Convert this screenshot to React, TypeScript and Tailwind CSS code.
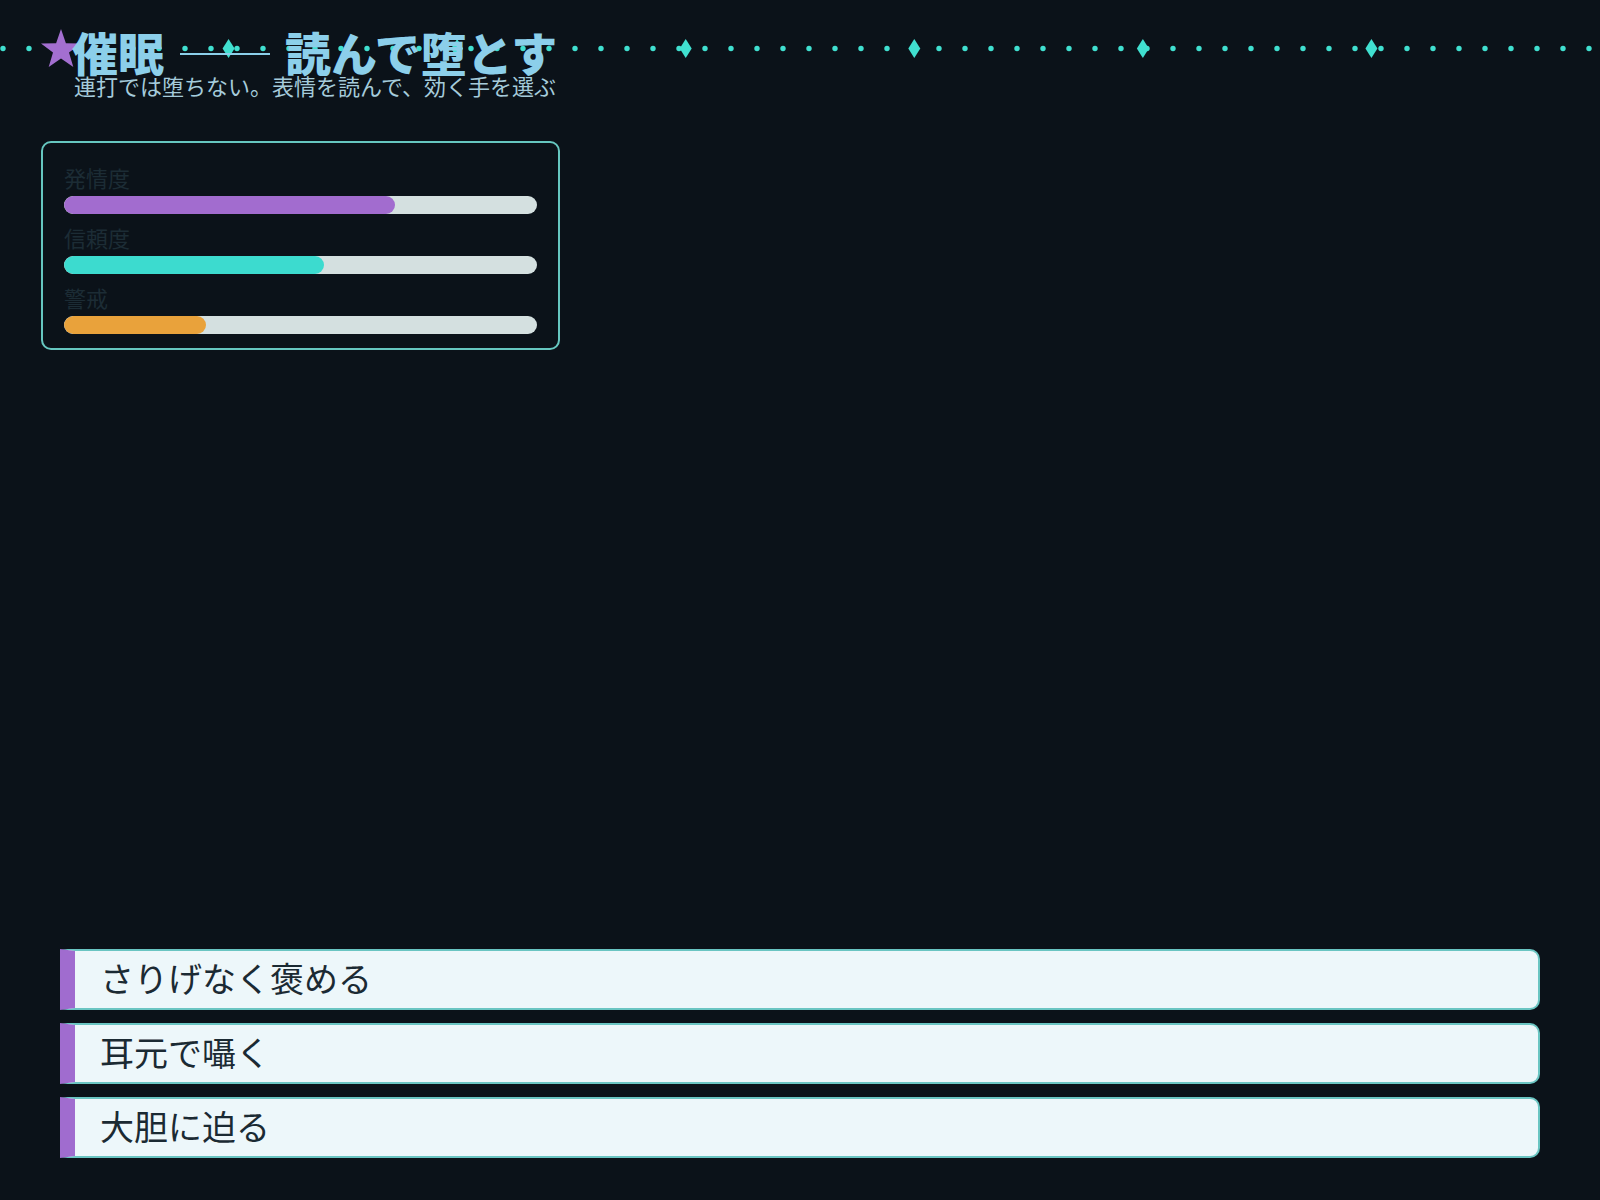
import React from 'react';

type Stat = {
  label: string;
  value: number;
  color: string;
};

const stats: Stat[] = [
  { label: '発情度', value: 70, color: 'bg-[#a26ccf]' },
  { label: '信頼度', value: 55, color: 'bg-[#3cdbcf]' },
  { label: '警戒', value: 30, color: 'bg-[#e9a23b]' },
];

const choices = ['さりげなく褒める', '耳元で囁く', '大胆に迫る'];

// dotted ribbon behind the title: small dots every 26px, a diamond every seventh of the width
const DotBand: React.FC = () => {
  const dots = Array.from({ length: 62 }, (_, i) => 3 + i * 26);
  const diamonds = Array.from({ length: 6 }, (_, i) => ((i + 1) * 1600) / 7);
  return (
    <svg
      className="absolute left-0 top-[36px] h-[25px] w-full"
      viewBox="0 0 1600 25"
      preserveAspectRatio="none"
    >
      {dots.map((x) => (
        <circle key={x} cx={x} cy={12.5} r={2.7} fill="#40e0d0" />
      ))}
      {diamonds.map((x) => (
        <polygon
          key={x}
          points={`${x},3 ${x + 6},12.5 ${x},22 ${x - 6},12.5`}
          fill="#40e0d0"
        />
      ))}
    </svg>
  );
};

const Star: React.FC = () => (
  <svg className="absolute left-[-32px] top-[1px] h-[40px] w-[42px]" viewBox="0 0 42 40">
    <polygon
      points="21,0 25.9,14.3 41,14.5 29,23.6 33.3,38 21,29.4 8.7,38 13,23.6 1,14.5 16.1,14.3"
      fill="#a36fd0"
    />
  </svg>
);

export default function App() {
  return (
    <div className="relative flex min-h-screen w-full flex-col bg-[#0b1219] font-['Noto_Sans_CJK_JP','Noto_Sans',sans-serif]">
      <header className="relative pl-[72px] pt-[28px]">
        <DotBand />
        <h1 className="relative flex items-center whitespace-nowrap text-[46px] font-black leading-[46px] text-[#8ccfea]">
          <Star />
          <span className="relative">催眠</span>
          <span className="relative ml-[16px] mr-[15px] mt-[6px] h-[1.5px] w-[90px] bg-[#8ccfea]" />
          <span className="relative">読んで堕とす</span>
        </h1>
        <p className="relative -mt-[2px] ml-[2px] whitespace-nowrap text-[22px] leading-[26px] text-[#a5cbdb]">
          連打では堕ちない。表情を読んで、効く手を選ぶ
        </p>
      </header>

      <section className="ml-[41px] mt-[43px] flex w-[519px] flex-col gap-[10px] rounded-[10px] border-2 border-[#66c7c0] px-[21px] pb-[14px] pt-[21px]">
        {stats.map((s) => (
          <div key={s.label} className="flex flex-col">
            <span className="text-[22px] leading-[26px] text-[#1c2c35]">{s.label}</span>
            <div className="mt-[6px] h-[18px] w-full overflow-hidden rounded-full bg-[#d4e0e0]">
              <div className={`h-full rounded-full ${s.color}`} style={{ width: `${s.value}%` }} />
            </div>
          </div>
        ))}
      </section>

      <div className="flex-1" />

      <nav className="flex flex-col gap-[13px] px-[60px] pb-[42px]">
        {choices.map((c) => (
          <button
            key={c}
            className="flex h-[61px] w-full items-center rounded-r-[10px] border-2 border-l-[15px] border-[#6ac5c2] border-l-[#a06ccf] bg-[#edf7fa] pb-[3px] pl-[25px] text-left text-[34px] leading-none text-[#1b2a33]"
          >
            {c}
          </button>
        ))}
      </nav>
    </div>
  );
}
